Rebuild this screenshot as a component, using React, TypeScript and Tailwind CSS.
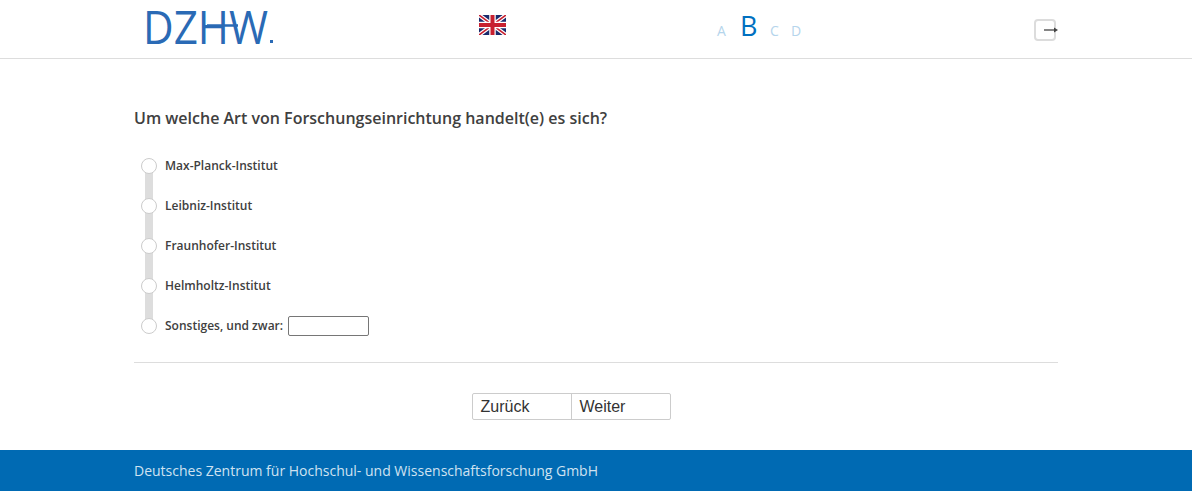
const options = ["Max-Planck-Institut", "Leibniz-Institut", "Fraunhofer-Institut", "Helmholtz-Institut"];

function Logo() {
  return (
    <svg width="132" height="40" viewBox="0 0 132 40" className="block overflow-visible">
      <text x="-3" y="34.5" fill="#2a6ab5" fontFamily="'Open Sans', sans-serif" fontSize="45" fontWeight="400" textLength="125" lengthAdjust="spacingAndGlyphs">
        DZHW
      </text>
      <path d="M61 16.5h31" stroke="#2a6ab5" strokeWidth="2.5" fill="none" />
      <rect x="124" y="31" width="3" height="3" fill="#2a6ab5" />
    </svg>
  );
}

function Flag() {
  return (
    <svg width="27" height="20" viewBox="0 0 27 20" className="block">
      <rect width="27" height="20" fill="#1a2a6c" />
      <path d="M0 0l27 20M27 0L0 20" stroke="#fff" strokeWidth="4" />
      <path d="M0 0l27 20M27 0L0 20" stroke="#c8202f" strokeWidth="1.6" />
      <path d="M13.5 0v20M0 10h27" stroke="#fff" strokeWidth="6.5" />
      <path d="M13.5 0v20M0 10h27" stroke="#c8202f" strokeWidth="4" />
    </svg>
  );
}

export default function App() {
  return (
    <div className="bg-white font-['Open_Sans',sans-serif] text-[#404040]">
      <header className="h-[59px] border-b border-[#dddddd]">
        <div className="mx-auto flex h-[58px] w-[924px] items-start">
          <div className="ml-3 mt-[9px] w-[333px]">
            <Logo />
          </div>
          <div className="mt-[15px] w-[238px]">
            <Flag />
          </div>
          <div className="mt-[6px] flex w-[317px] items-baseline text-[14px] text-[#b5d5ec]">
            <span className="w-[23px]">A</span>
            <span className="w-[30px] text-[27px] font-medium text-[#0070c0]">B</span>
            <span className="w-[21px]">C</span>
            <span>D</span>
          </div>
          <div className="relative mt-[19px] h-[22px] w-[22px] rounded-[4px] border-2 border-[#dcdcdc]">
            <svg width="16" height="6" viewBox="0 0 16 6" className="absolute left-[8px] top-[6px]">
              <path d="M0 3h12" stroke="#444" strokeWidth="1.3" />
              <path d="M10 0.5l4 2.5-4 2.5z" fill="#444" />
            </svg>
          </div>
        </div>
      </header>

      <main className="mx-auto w-[924px]">
        <h1 className="pt-[47px] text-[16px] leading-[24px] font-semibold">Um welche Art von Forschungseinrichtung handelt(e) es sich?</h1>

        <div className="relative mt-[16px]">
          <div className="absolute left-[11px] top-[20px] h-[160px] w-2 bg-[#dddddd]" />
          {options.map((o) => (
            <div key={o} className="relative flex h-10 items-center">
              <span className="ml-[7px] h-4 w-4 rounded-full border border-[#cccccc] bg-white" />
              <span className="ml-[8px] text-[12px] font-semibold">{o}</span>
            </div>
          ))}
          <div className="relative flex h-10 items-center">
            <span className="ml-[7px] h-4 w-4 rounded-full border border-[#cccccc] bg-white" />
            <span className="ml-[8px] text-[12px] font-semibold">Sonstiges, und zwar:</span>
            <input className="ml-[5px] h-5 w-[81px] rounded-[2px] border border-[#767676] bg-white" />
          </div>
        </div>

        <div className="mt-[16px] border-t border-[#dddddd]" />

        <div className="flex justify-center pt-[30px] pr-[50px] pb-[30px] font-['Liberation_Sans',sans-serif] text-[16px] text-[#333333]">
          <div className="flex h-[27px] w-[199px] rounded-[2px] border border-[#cccccc]">
            <button className="w-[99px] border-r border-[#cccccc] pl-2 text-left">Zurück</button>
            <button className="flex-1 pl-2 text-left">Weiter</button>
          </div>
        </div>
      </main>

      <footer className="h-[41px] bg-[#006ab3]">
        <div className="mx-auto w-[924px] text-[14px] leading-[41px] text-[#cfe2f1]">Deutsches Zentrum für Hochschul- und Wissenschaftsforschung GmbH</div>
      </footer>
    </div>
  );
}
